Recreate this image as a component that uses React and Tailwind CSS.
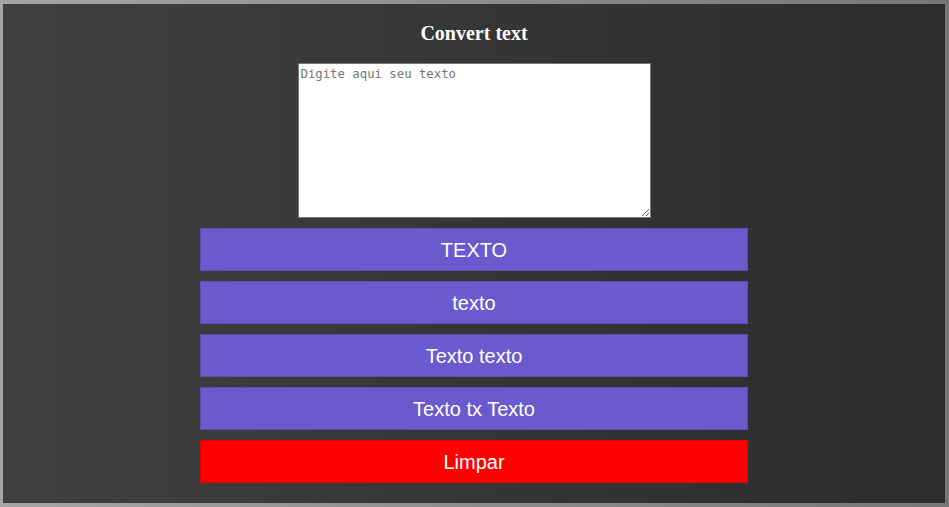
import React, { useState } from 'react';

export default function App() {
  const [text, setText] = useState('');

  const buttons = ['TEXTO', 'texto', 'Texto texto', 'Texto tx Texto'];

  return (
    <div className="w-[949px] h-[507px] bg-gradient-to-r from-[#a5a5a5] to-[#767676] pt-[4px] pb-[4px] pl-[3px] pr-[4px]">
      <div className="h-full bg-gradient-to-r from-[#404040] to-[#2c2c2c] flex flex-col items-center">
        <h1 className="mt-[17px] h-[24px] leading-[24px] text-white font-bold text-[20px] font-['Liberation_Serif',serif]">
          Convert text
        </h1>
        <textarea
          value={text}
          onChange={(e) => setText(e.target.value)}
          placeholder="Digite aqui seu texto"
          className="mt-[18px] w-[353px] h-[155px] bg-white border border-[#767676] px-[2px] py-[2px] text-[12.3px] leading-[16px] font-['DejaVu_Sans_Mono',monospace] text-black placeholder:text-[#757575] outline-none"
        />
        <div className="mt-[10px] flex flex-col gap-[10px] w-[548px]">
          {buttons.map((b) => (
            <button
              key={b}
              className="h-[43px] bg-[#6a5acd] border border-[#5a4db0] text-white text-[20px] font-['Liberation_Sans',Arial,sans-serif]"
            >
              {b}
            </button>
          ))}
          <button
            onClick={() => setText('')}
            className="h-[43px] bg-[#ff0000] border border-[#e00000] text-white text-[20px] font-['Liberation_Sans',Arial,sans-serif]"
          >
            Limpar
          </button>
        </div>
      </div>
    </div>
  );
}
